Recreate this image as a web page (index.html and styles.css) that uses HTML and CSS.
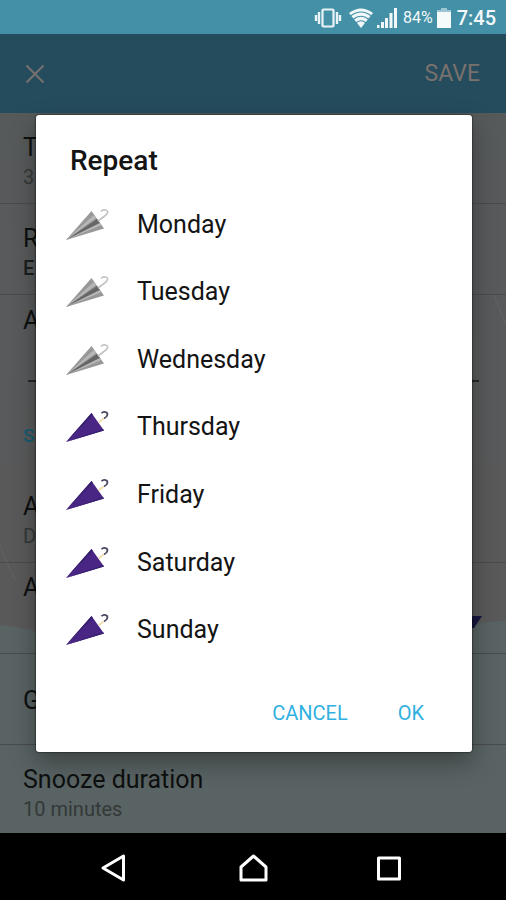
FILE: index.html
```html
<!DOCTYPE html>
<html lang="en">
<head>
<meta charset="utf-8">
<meta name="viewport" content="width=device-width, initial-scale=1">
<title>Repeat</title>
<link rel="stylesheet" href="styles.css">
</head>
<body>
<svg class="defs" aria-hidden="true">
  <symbol id="closed-grey" viewBox="0 0 44 34">
    <path d="M1 32 26.500 3 39 20.500z" fill="#989898"/>
    <path d="M1 32 32 11 35 15z" fill="#666"/>
    <path d="M1 32 29 7 31 10z" fill="#b8b8b8"/>
    <path d="M1 32 35 15 36.500 17z" fill="#b8b8b8"/>
    <path d="M33 13 39 8.500C43 6 44 2.500 40.500 2 38.500 1.600 37 2.200 36 3.500" fill="none" stroke="#c2c2c2" stroke-width="1.600"/>
  </symbol>
  <symbol id="closed-purple" viewBox="0 0 44 34">
    <path d="M1 32 26.500 3 39 20.500z" fill="#4a2684"/>
    <path d="M1 32 26.500 3 28 5zM1 32 39 20.500 38 19z" fill="#38206f"/>
    <path d="M33.500 12.500 38.500 8.500" stroke="#f3dfae" stroke-width="2" fill="none"/>
    <path d="M39 8.500C43 6.500 43.500 2.800 40.500 2.100 38.800 1.700 37.400 2.200 36.500 3.300" fill="none" stroke="#4a4862" stroke-width="1.800"/>
  </symbol>
</svg>

<header class="status">
  <svg width="28" height="20" viewBox="0 0 28 20" aria-label="Vibrate"><rect x="8.500" y="1.500" width="11" height="17" rx="1" fill="none" stroke="#eaf4f7" stroke-width="2.200"/><path d="M5 4v12M23 4v12M2 7v6M26 7v6" stroke="#eaf4f7" stroke-width="2.400" fill="none"/></svg>
  <svg class="wifi" width="24" height="20" viewBox="0 0 24 20" aria-label="Wi-Fi"><path d="M0 5Q12-4 24 5L12 20z" fill="#f2f8fa"/><path d="M1.500 8Q12 0 22.500 8M4 11.500Q12 5 20 11.500M7 15Q12 10.500 17 15" stroke="#4390a7" stroke-width="1.100" fill="none"/></svg>
  <svg class="signal" width="20" height="20" viewBox="0 0 20 20" aria-label="Signal"><path d="M0 17h2.500v3H0zM4 14h3v6H4zM8 10h3v10H8zM12.500 5h3v15h-3zM17 0h3v20h-3z" fill="#f2f8fa"/></svg>
  <span class="percent">84%</span>
  <svg class="battery" width="14" height="20" viewBox="0 0 14 20" aria-label="Battery"><path d="M4 0h6v2h4v2H0V2h4z" fill="#9cc6d3"/><path d="M0 4h14v16H0z" fill="#f5fafb"/></svg>
  <span class="clock">7:45</span>
</header>

<main class="stage">
  <div class="appbar">
    <button type="button" class="close" aria-label="Close"><svg width="20" height="20" viewBox="0 0 20 20"><path d="M1.500 1.500l17 17M18.500 1.500l-17 17" stroke="#79716e" stroke-width="2" fill="none"/></svg></button>
    <button type="button" class="save">SAVE</button>
  </div>

  <div class="settings">
    <svg class="scenery" viewBox="0 0 506 720" preserveAspectRatio="none" aria-hidden="true">
      <path d="M0 512Q30 514 60 528H440Q470 508 506 508V720H0z" fill="#596363"/>
      <path d="M464 503h18l-8 12h-10z" fill="#15163d"/>
      <path d="M494 182Q504 208 512 224M0 432Q8 454 16 468" stroke="#626464" stroke-width="1" fill="none"/>
    </svg>
    <section class="row"><div class="label">T</div><div class="value">3</div></section>
    <section class="row"><div class="label">R</div><div class="value strong">E</div></section>
    <section class="field"><label class="label" for="name">A</label><input id="name" type="text"></section>
    <h2 class="section">S</h2>
    <section class="row"><div class="label">A</div><div class="value">D</div></section>
    <section class="row high"><div class="label">A</div></section>
    <section class="row middle"><div class="label">G</div></section>
    <section class="row last"><div class="label">Snooze duration</div><div class="value">10 minutes</div></section>
  </div>

  <div class="overlay">
    <form class="dialog" role="dialog" aria-labelledby="title">
      <h1 id="title">Repeat</h1>
      <div class="days">
        <label class="day"><span class="check"><input type="checkbox"><svg><use href="#closed-grey"/></svg></span>Monday</label>
        <label class="day"><span class="check"><input type="checkbox"><svg><use href="#closed-grey"/></svg></span>Tuesday</label>
        <label class="day"><span class="check"><input type="checkbox"><svg><use href="#closed-grey"/></svg></span>Wednesday</label>
        <label class="day"><span class="check"><input type="checkbox" checked><svg><use href="#closed-purple"/></svg></span>Thursday</label>
        <label class="day"><span class="check"><input type="checkbox" checked><svg><use href="#closed-purple"/></svg></span>Friday</label>
        <label class="day"><span class="check"><input type="checkbox" checked><svg><use href="#closed-purple"/></svg></span>Saturday</label>
        <label class="day"><span class="check"><input type="checkbox" checked><svg><use href="#closed-purple"/></svg></span>Sunday</label>
      </div>
      <div class="actions">
        <button type="button">CANCEL</button>
        <button type="button">OK</button>
      </div>
    </form>
  </div>
</main>

<nav class="nav">
  <button type="button" aria-label="Back"><svg width="32" height="32" viewBox="0 0 32 32"><path d="M4 16 24.500 4v24z"/></svg></button>
  <button type="button" aria-label="Home"><svg width="32" height="32" viewBox="0 0 32 32"><path d="M4 28V15L16.500 4 29 15v13z"/></svg></button>
  <button type="button" aria-label="Recent apps"><svg width="32" height="32" viewBox="0 0 32 32"><path d="M3.500 6h21v21h-21z"/></svg></button>
</nav>
</body>
</html>
```

FILE: styles.css
```css
* { box-sizing: border-box; }

body {
  margin: 0;
  min-height: 100vh;
  display: flex;
  flex-direction: column;
  background: #000;
  font-family: Roboto, "Liberation Sans", sans-serif;
}

button {
  border: 0;
  padding: 0;
  background: none;
  font: inherit;
  color: inherit;
}

svg { display: block; flex: none; }

.defs { position: absolute; width: 0; height: 0; }

.status {
  height: 34px;
  display: flex;
  align-items: center;
  justify-content: flex-end;
  padding: 2px 10px 0 0;
  background: #4390a7;
  color: #f2f8fa;
}
.wifi { margin-left: 7px; }
.signal { margin-left: 4px; }
.percent { margin-left: 6px; font-size: 16px; line-height: 20px; }
.battery { margin-left: 4px; }
.clock { margin-left: 6px; font-size: 20px; line-height: 20px; font-weight: 500; }

.stage {
  position: relative;
  flex: 1;
  display: flex;
  flex-direction: column;
}

.appbar {
  height: 79px;
  display: flex;
  align-items: center;
  justify-content: space-between;
  padding: 0 26px 0 25px;
  background: #244c5d;
  color: #79716e;
}
.save { font-size: 23px; line-height: 28px; }

.settings {
  position: relative;
  flex: 1;
  display: flex;
  flex-direction: column;
  background: linear-gradient(#575a5b, #5b595a);
  color: #0e1010;
}
.scenery {
  position: absolute;
  inset: 0;
  width: 100%;
  height: 100%;
}
.row, .field, .section { position: relative; padding: 0 23px; }
.row {
  height: 91px;
  padding-top: 19px;
  border-bottom: 1px solid #494c4c;
}
.high { padding-top: 9px; }
.middle { padding-top: 31px; }
.last { flex: 1; border-bottom: 0; }
.label { display: block; font-size: 25px; line-height: 32px; }
.value { font-size: 20px; line-height: 26px; color: #333838; }
.strong { font-weight: 500; color: #1b1e1e; }
.field { padding-top: 10px; }
.field input {
  display: block;
  width: calc(100% - 9px);
  height: 45px;
  margin-left: 5px;
  border: 0;
  border-bottom: 2px solid #252828;
  padding: 0;
  background: none;
  outline: 0;
}
.section {
  height: 90px;
  margin: 0;
  padding-top: 40px;
  font-size: 19px;
  line-height: 28px;
  font-weight: 500;
  color: #175c70;
}

.overlay {
  position: absolute;
  inset: 0;
  display: flex;
  padding: 81px 34px 81px 36px;
}
.dialog {
  flex: 1;
  display: flex;
  flex-direction: column;
  border-radius: 3px;
  background: #fff;
  box-shadow: 0 0 2px #000, 0 10px 24px rgba(0, 0, 0, .35);
  color: #141414;
}
.dialog h1 {
  margin: 0;
  padding: 30px 34px 14px;
  font-size: 28px;
  line-height: 32px;
  font-weight: 500;
}
.days {
  flex: 1;
  display: grid;
  grid-auto-rows: 1fr;
}
.day {
  display: flex;
  align-items: center;
  gap: 28px;
  padding-left: 29px;
  font-size: 25px;
  line-height: 32px;
}
.check { position: relative; }
.check svg { width: 44px; height: 34px; }
.check input {
  position: absolute;
  inset: 0;
  margin: 0;
  width: 100%;
  height: 100%;
  opacity: 0;
}
.actions {
  height: 88px;
  display: flex;
  justify-content: flex-end;
  align-items: center;
  gap: 50px;
  padding: 10px 48px 0 0;
  color: #31b1e0;
  font-size: 20px;
  line-height: 24px;
}

.nav {
  height: 67px;
  display: flex;
  align-items: center;
  justify-content: center;
  gap: 106px;
  padding-top: 2px;
  background: #000;
}
.nav path {
  fill: none;
  stroke: #fff;
  stroke-width: 3;
  stroke-linejoin: round;
}
```
